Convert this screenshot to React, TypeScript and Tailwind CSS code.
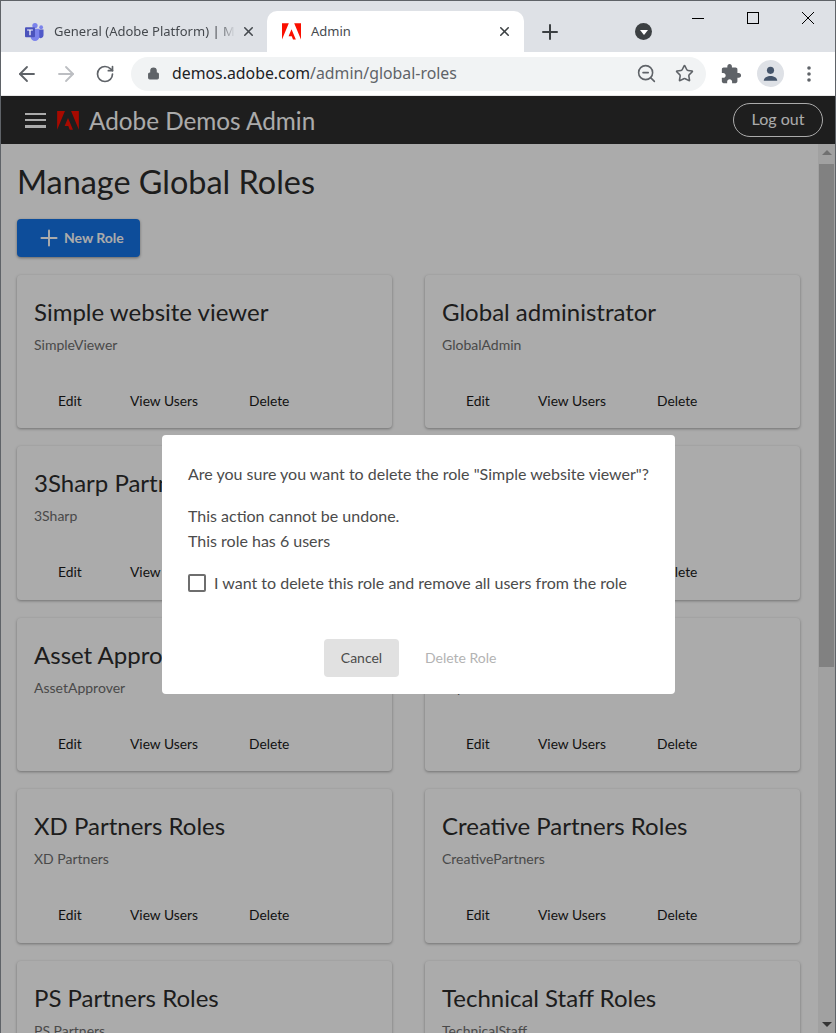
import { ArrowLeft, ArrowRight, Lock, Plus, RotateCw, Star, X, ZoomOut } from "lucide-react";

const roles = [
  ["Simple website viewer", "SimpleViewer"],
  ["Global administrator", "GlobalAdmin"],
  ["3Sharp Partner Roles", "3Sharp"],
  ["Demo Admins", "DemoAdmin"],
  ["Asset Approver", "AssetApprover"],
  ["Experts", "Experts"],
  ["XD Partners Roles", "XD Partners"],
  ["Creative Partners Roles", "CreativePartners"],
  ["PS Partners Roles", "PS Partners"],
  ["Technical Staff Roles", "TechnicalStaff"],
];

function AdobeLogo({ color, className }: { color: string; className: string }) {
  return (
    <svg viewBox="0 0 24 21" className={className} fill={color}>
      <path d="M0 0h8.600L0 20.600zM15.400 0H24v20.600zM12 7.600l5.500 13h-3.600l-1.600-4.100h-4z" />
    </svg>
  );
}

function TeamsLogo() {
  return (
    <svg viewBox="0 0 20 20" className="h-[19px] w-[19px]">
      <circle cx="17" cy="5.500" r="2" fill="#7b83eb" />
      <circle cx="10.500" cy="3.800" r="2.800" fill="#7b83eb" />
      <path d="M14 8h5.500v6a3 3 0 0 1-5.500 1.600z" fill="#5059c9" />
      <path d="M6 7h9v8.500a4.500 4.500 0 0 1-9 0z" fill="#7b83eb" />
      <rect x="0" y="5.500" width="10.500" height="10.500" rx="1" fill="#4b53bc" />
      <path d="M2.200 7.800h6.100v1.100H5.900v5H4.600v-5H2.200z" fill="#fff" />
    </svg>
  );
}

function RoleCard({ title, name }: { title: string; name: string }) {
  return (
    <div className="flex h-[153.500px] flex-col rounded bg-white shadow-[0_1px_3px_rgba(0,0,0,0.35)]">
      <div className="mt-[19px] pl-[17px] text-[24px] leading-[36px] text-[#2c2c2c]">{title}</div>
      <div className="mt-[5px] pl-[17px] text-[14px] leading-[20px] text-[#6e6e6e]">{name}</div>
      <div className="mt-[36px] flex text-[13.800px] leading-[20px] text-[#1a1a1a]">
        <span className="ml-[41px] w-[72px]">Edit</span>
        <span className="w-[119px]">View Users</span>
        <span>Delete</span>
      </div>
    </div>
  );
}

function Chrome() {
  return (
    <div className="shrink-0 bg-white font-['Noto_Sans',sans-serif]">
      <div className="flex h-[51px] bg-[#dee1e6] pl-[10px]">
        <div className="flex h-[41px] w-[256px] items-center self-end pl-[14px]">
          <TeamsLogo />
          <span className="ml-[10px] w-[181px] overflow-hidden whitespace-nowrap text-[13px] text-[#45494e] [mask-image:linear-gradient(to_right,black_165px,transparent_181px)]">
            General (Adobe Platform) | Microsoft Teams
          </span>
          <X size={15} strokeWidth={2.5} className="ml-[6px] text-[#45494e]" />
        </div>
        <div className="flex h-[41px] w-[257px] items-center self-end rounded-t-[10px] bg-white pl-[15px]">
          <AdobeLogo color="#fa0f00" className="h-[17px] w-[19px]" />
          <span className="ml-[10px] w-[186px] text-[13px] text-[#45494e]">Admin</span>
          <X size={15} strokeWidth={2.5} className="text-[#3c4043]" />
        </div>
        <div className="flex h-[41px] items-center self-end">
          <Plus size={24} strokeWidth={2} className="ml-[14px] text-[#3c4043]" />
          <div className="ml-[73px] flex h-[17px] w-[17px] items-center justify-center rounded-full bg-[#3c4043]">
            <div className="mt-[2px] h-0 w-0 border-x-[4px] border-t-[5px] border-x-transparent border-t-white" />
          </div>
        </div>
        <div className="ml-auto flex h-[34px] items-center text-black">
          <div className="flex w-[55px] justify-center">
            <div className="h-px w-[12px] bg-black" />
          </div>
          <div className="flex w-[55px] justify-center">
            <div className="h-[12px] w-[12px] border border-black" />
          </div>
          <div className="flex w-[55px] justify-center">
            <svg viewBox="0 0 12 12" className="h-[12px] w-[12px]" stroke="#000" strokeWidth="1">
              <path d="M0 0l12 12M12 0L0 12" />
            </svg>
          </div>
        </div>
      </div>
      <div className="flex h-[43px] items-center">
        <ArrowLeft size={24} strokeWidth={1.8} className="ml-[14px] text-[#5f6368]" />
        <ArrowRight size={24} strokeWidth={1.8} className="ml-[15px] text-[#bcbec2]" />
        <RotateCw size={20} strokeWidth={2} className="ml-[17px] text-[#5f6368]" />
        <div className="ml-[16px] flex h-[34px] w-[575px] items-center rounded-full bg-[#f1f3f4] pr-[12px] pl-[16px]">
          <Lock size={13} fill="#5f6368" className="text-[#5f6368]" />
          <span className="ml-[12px] text-[15.850px] text-[#202124]">
            demos.adobe.com<span className="text-[#5f6368]">/admin/global-roles</span>
          </span>
          <ZoomOut size={21} strokeWidth={1.8} className="ml-auto text-[#5f6368]" />
          <Star size={19} strokeWidth={2} className="ml-[18px] text-[#5f6368]" />
        </div>
        <svg viewBox="0 0 24 24" className="ml-[14px] h-[22px] w-[22px]" fill="#5f6368">
          <path d="M20.500 11H19V7c0-1.100-.9-2-2-2h-4V3.500C13 2.120 11.880 1 10.500 1S8 2.120 8 3.500V5H4c-1.100 0-1.990.9-1.990 2v3.800H3.500c1.490 0 2.700 1.210 2.700 2.700s-1.210 2.700-2.700 2.700H2V20c0 1.100.9 2 2 2h3.800v-1.500c0-1.490 1.210-2.700 2.700-2.700 1.490 0 2.700 1.210 2.700 2.700V22H17c1.100 0 2-.9 2-2v-4h1.500c1.380 0 2.500-1.120 2.500-2.500S21.880 11 20.500 11z" />
        </svg>
        <div className="ml-[15px] flex h-[27px] w-[27px] items-center justify-center rounded-full bg-[#dee1e6]">
          <svg viewBox="0 0 24 24" className="h-[19px] w-[19px]" fill="#44546a">
            <circle cx="12" cy="8" r="4.500" />
            <path d="M3.500 21c0-4 4.500-6 8.500-6s8.500 2 8.500 6z" />
          </svg>
        </div>
        <svg viewBox="0 0 18 18" className="ml-[15.500px] h-[18px] w-[18px]" fill="#5f6368">
          <circle cx="9" cy="3" r="1.800" />
          <circle cx="9" cy="9" r="1.800" />
          <circle cx="9" cy="15" r="1.800" />
        </svg>
      </div>
    </div>
  );
}

export default function App() {
  return (
    <div className="flex h-[1033px] w-[836px] flex-col overflow-hidden border-x border-t border-[#5f6368] font-['Lato','Noto_Sans',sans-serif]">
      <Chrome />
      <div className="relative flex min-h-0 flex-1 flex-col border-t border-[#e8e8e8] bg-white">
        <div className="flex h-[48px] shrink-0 items-center justify-between bg-[#2d2d2d] pr-[12px] pl-[24px] text-white">
          <div className="flex items-center">
            <div className="flex h-[15px] w-[21px] flex-col justify-between">
              <div className="h-[2.500px] bg-white" />
              <div className="h-[2.500px] bg-white" />
              <div className="h-[2.500px] bg-white" />
            </div>
            <AdobeLogo color="#fa0f00" className="ml-[11px] h-[19px] w-[22px]" />
            <span className="ml-[10px] pt-[2px] text-[24.300px]">Adobe Demos Admin</span>
          </div>
          <div className="flex h-[34px] w-[90px] items-center justify-center rounded-full border border-white pb-[2px] text-[16px]">Log out</div>
        </div>
        <div className="flex min-h-0 flex-1">
          <div className="min-w-0 flex-1 overflow-hidden pr-[18px] pl-[16px]">
            <h1 className="mt-[16px] text-[32.400px] leading-[44px] text-[#2c2c2c]">Manage Global Roles</h1>
            <div className="mt-[15px] flex h-[38px] w-[123px] items-center rounded bg-[#1473e6] pl-[19px] text-[14px] font-bold text-white shadow-[0_1px_3px_rgba(0,0,0,0.4)]">
              <Plus size={26} strokeWidth={1.8} />
              <span className="mb-[1px] ml-[2px]">New Role</span>
            </div>
            <div className="mt-[17.600px] grid grid-cols-[375px_375px] gap-x-[33px] gap-y-[18px]">
              {roles.map(([title, name]) => (
                <RoleCard key={name} title={title} name={name} />
              ))}
            </div>
          </div>
          <div className="flex w-[17px] shrink-0 flex-col items-center bg-[#f1f1f1]">
            <div className="mt-[6px] h-0 w-0 border-x-[5px] border-b-[5px] border-x-transparent border-b-[#a8a8a8]" />
            <div className="mt-[9px] h-[503px] w-[15px] bg-[#c1c1c1]" />
            <div className="mt-auto mb-[6px] h-0 w-0 border-x-[5px] border-t-[5px] border-x-transparent border-t-[#505050]" />
          </div>
        </div>
        <div className="absolute inset-0 bg-black/[.33]" />
        <div className="absolute top-[339px] left-[161px] h-[259px] w-[513px] rounded bg-white pt-[26px] pl-[26px] text-[16px] leading-[25px] text-[#4b4b4b]">
          <p>Are you sure you want to delete the role "Simple website viewer"?</p>
          <p className="mt-[17px]">This action cannot be undone.</p>
          <p>This role has 6 users</p>
          <div className="mt-[17px] flex items-center">
            <div className="h-[18px] w-[18px] rounded-[2px] border-2 border-[#6e6e6e]" />
            <span className="ml-[8px]">I want to delete this role and remove all users from the role</span>
          </div>
          <div className="mt-[44px] ml-[136px] flex items-center text-[14px]">
            <div className="flex h-[38px] w-[75px] items-center justify-center rounded bg-[#e1e1e1] pb-[1px] text-[#4b4b4b]">Cancel</div>
            <span className="mb-[1px] ml-[26px] text-[#b3b3b3]">Delete Role</span>
          </div>
        </div>
      </div>
    </div>
  );
}
